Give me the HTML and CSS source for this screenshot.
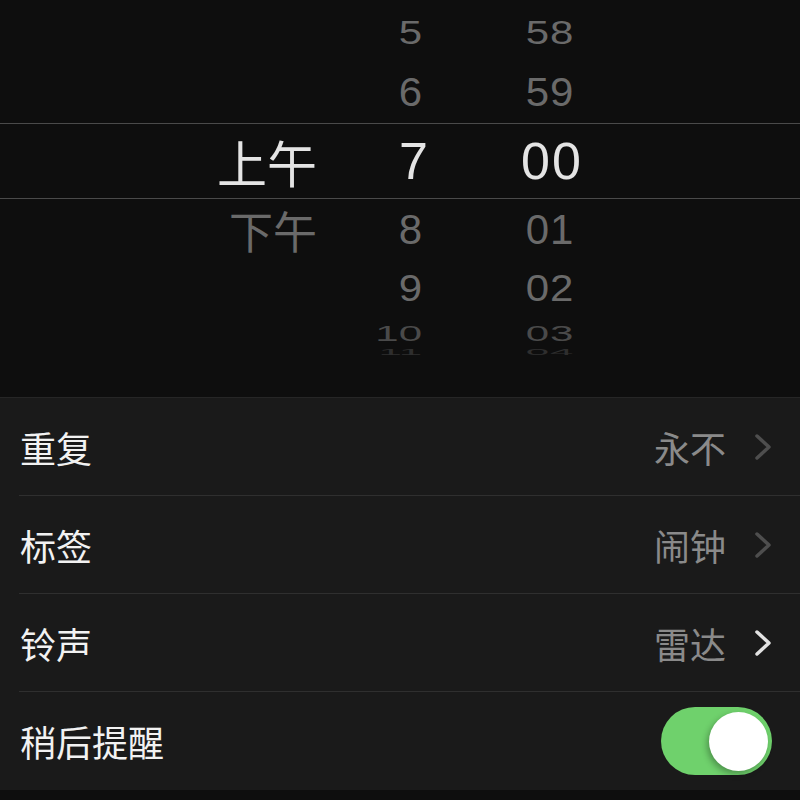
FILE: index.html
```html
<!DOCTYPE html>
<html lang="zh-CN">
<head>
  <meta charset="UTF-8">
  <meta name="viewport" content="width=device-width, initial-scale=1.0">
  <title>编辑闹钟</title>
  <link rel="stylesheet" href="styles.css">
</head>
<body>

  <!-- Time picker wheel -->
  <div class="picker">
    <div class="wheel-top">
      <div class="wheel-row r-5">
        <span class="ampm"></span>
        <span class="hour">5</span>
        <span class="minute">58</span>
      </div>
      <div class="wheel-row r-6">
        <span class="ampm"></span>
        <span class="hour">6</span>
        <span class="minute">59</span>
      </div>
    </div>

    <div class="wheel-row selected">
      <span class="ampm">上午</span>
      <span class="hour">7</span>
      <span class="minute">00</span>
    </div>

    <div class="wheel-bottom">
      <div class="wheel-row r-8">
        <span class="ampm">下午</span>
        <span class="hour">8</span>
        <span class="minute">01</span>
      </div>
      <div class="wheel-row r-9">
        <span class="ampm"></span>
        <span class="hour">9</span>
        <span class="minute">02</span>
      </div>
      <div class="wheel-row r-10">
        <span class="ampm"></span>
        <span class="hour">10</span>
        <span class="minute">03</span>
      </div>
      <div class="wheel-row r-11">
        <span class="ampm"></span>
        <span class="hour">11</span>
        <span class="minute">04</span>
      </div>
    </div>
  </div>

  <!-- Settings list -->
  <div class="settings">
    <div class="cell">
      <span class="cell-label">重复</span>
      <span class="cell-detail">
        永不
        <svg class="chevron dim" viewBox="0 0 18 28"><polyline points="3,3 15,14 3,25"/></svg>
      </span>
    </div>
    <div class="cell">
      <span class="cell-label">标签</span>
      <span class="cell-detail">
        闹钟
        <svg class="chevron dim" viewBox="0 0 18 28"><polyline points="3,3 15,14 3,25"/></svg>
      </span>
    </div>
    <div class="cell">
      <span class="cell-label">铃声</span>
      <span class="cell-detail">
        雷达
        <svg class="chevron" viewBox="0 0 18 28"><polyline points="3,3 15,14 3,25"/></svg>
      </span>
    </div>
    <div class="cell">
      <span class="cell-label">稍后提醒</span>
      <span class="switch on"><span class="knob"></span></span>
    </div>
  </div>

</body>
</html>
```

FILE: styles.css
```css
html, body {
  margin: 0;
  padding: 0;
}
body {
  width: 800px;
  height: 800px;
  overflow: hidden;
  background: #0e0e0e;
  font-family: "Liberation Sans", "Noto Sans CJK SC", sans-serif;
  color: #f2f2f2;
}

/* picker */
.picker {
  height: 397px;
  display: flex;
  flex-direction: column;
  overflow: hidden;
}
.wheel-top {
  padding-top: 3px;
  height: 120px;
}
.wheel-bottom {
  flex: 1;
  overflow: hidden;
}
.wheel-row {
  display: grid;
  grid-template-columns: 317px 105px 256px;
  align-items: center;
  height: 60px;
  font-size: 42px;
  color: #6a6a6a;
}
.wheel-row span {
  display: block;
  line-height: 1;
}
.ampm {
  text-align: right;
  font-family: "Noto Sans CJK SC", sans-serif;
}
.hour {
  text-align: right;
}
.minute {
  text-align: center;
  letter-spacing: 1px;
}

.r-5 span { transform: scaleY(0.78); }
.r-6 span { transform: scaleY(0.96); }
.r-8 { height: 62px; }
.r-8 .ampm { font-size: 44px; }
.r-9 { height: 56px; }
.r-9 span { transform: scaleY(0.88); }
.r-10 { height: 22px; color: #4a4a4a; }
.r-10 span { transform: translateY(-4px) scaleY(0.52); }
.r-11 { height: 14px; color: #2e2e2e; }
.r-11 span { transform: translateY(-8px) scaleY(0.2); }

.wheel-row.selected {
  height: 74px;
  border-top: 1px solid #4a4a4a;
  border-bottom: 1px solid #4a4a4a;
  font-size: 52px;
  color: #e4e4e4;
}
.selected .ampm {
  font-size: 50px;
}
.selected .hour {
  margin-right: -6px;
}
.selected .minute {
  letter-spacing: 2px;
  padding-left: 4px;
}

/* settings list */
.settings {
  background: #1a1a1a;
  border-top: 1px solid #262626;
  padding-left: 19px;
}
.cell {
  height: 98px;
  display: flex;
  align-items: center;
  justify-content: space-between;
  padding-right: 28px;
  border-bottom: 1px solid #2f2f2f;
  box-sizing: border-box;
  font-family: "Noto Sans CJK SC", sans-serif;
  font-size: 36px;
}
.cell:last-child {
  border-bottom: none;
}
.cell-label {
  padding-left: 1px;
}
.cell-detail {
  display: flex;
  align-items: center;
  gap: 28px;
  color: #8a8a8a;
}
.chevron {
  width: 18px;
  height: 28px;
  fill: none;
  stroke: #e2e2e2;
  stroke-width: 3.5;
  stroke-linecap: round;
  stroke-linejoin: round;
}
.chevron.dim {
  stroke: #4e4e4e;
}

/* toggle */
.switch {
  width: 111px;
  height: 68px;
  border-radius: 34px;
  background: #6fd16c;
  box-sizing: border-box;
  display: flex;
  align-items: center;
  justify-content: flex-end;
  padding-right: 4px;
}
.knob {
  width: 59px;
  height: 59px;
  border-radius: 50%;
  background: #ffffff;
  box-shadow: -2px 3px 6px rgba(0, 0, 0, 0.3);
}
```
